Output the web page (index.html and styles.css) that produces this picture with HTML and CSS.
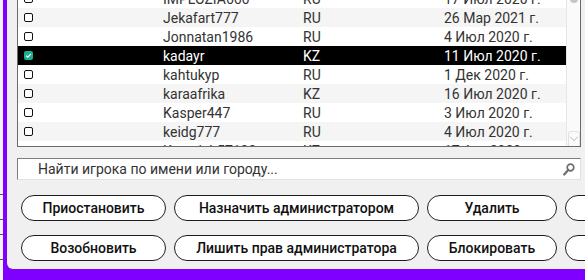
FILE: index.html
```html
<!doctype html>
<html>
	<head>
		<meta charset="utf-8" />
		<title>Игроки</title>
		<link rel="stylesheet" href="styles.css">
	</head>
	<body>
		<div class="screen">
			<div class="edge"></div>
			<div class="window">
				<div class="panel">
					<div class="list">
						<div class="rows">
							<div class="rows-inner">
								<div class="row"><span class="check"></span><span>IMPLOZIA666</span><span>RU</span><span>17 Июл 2020 г.</span></div>
								<div class="row"><span class="check"></span><span>Jekafart777</span><span>RU</span><span>26 Мар 2021 г.</span></div>
								<div class="row"><span class="check"></span><span>Jonnatan1986</span><span>RU</span><span>4 Июл 2020 г.</span></div>
								<div class="row selected"><span class="check checked"><svg viewBox="0 0 9 9" width="9" height="9"><path d="M2.2 4.8 L3.8 6.2 L6.9 2.9" fill="none" stroke="#fff" stroke-width="1.3"/></svg></span><span>kadayr</span><span>KZ</span><span>11 Июл 2020 г.</span></div>
								<div class="row"><span class="check"></span><span>kahtukyp</span><span>RU</span><span>1 Дек 2020 г.</span></div>
								<div class="row"><span class="check"></span><span>karaafrika</span><span>KZ</span><span>16 Июл 2020 г.</span></div>
								<div class="row"><span class="check"></span><span>Kasper447</span><span>RU</span><span>3 Июл 2020 г.</span></div>
								<div class="row"><span class="check"></span><span>keidg777</span><span>RU</span><span>4 Июл 2020 г.</span></div>
								<div class="row"><span class="check"></span><span>Kuzmich57100</span><span>KZ</span><span>17 Авг 2020 г.</span></div>
							</div>
						</div>
						<div class="scrollbar">
							<div class="thumb"></div>
							<div class="arrow">
								<svg viewBox="0 0 11 8" width="11" height="8"><path d="M1.5 1.5 L5.5 6 L9.5 1.5" fill="none" stroke="#b4b4b4" stroke-width="1"/></svg>
							</div>
						</div>
					</div>

					<label class="search">
						<input type="text" placeholder="Найти игрока по имени или городу..." />
						<svg class="search-icon" viewBox="0 0 12 13" width="12" height="13"><circle cx="7.5" cy="4.5" r="3.3" fill="none" stroke="#6e6e6e" stroke-width="1.7"/><path d="M5.2 7 L1.2 11.5" stroke="#6e6e6e" stroke-width="2.2" stroke-linecap="round"/></svg>
					</label>

					<div class="actions">
						<button type="button">Приостановить</button>
						<button type="button">Назначить администратором</button>
						<button type="button">Удалить</button>
						<button type="button">Сбросить</button>
						<button type="button">Возобновить</button>
						<button type="button">Лишить прав администратора</button>
						<button type="button">Блокировать</button>
						<button type="button">Обновить</button>
					</div>
				</div>
			</div>
		</div>
	</body>
</html>
```

FILE: styles.css
```css
* {
	box-sizing: border-box;
}

html {
	--color-frame: #8000ff;
	--color-panel: #f0f0f0;
	--color-text: #333;
	--color-line: #6b6b6b;
	--color-stripe: #f5f5f5;
	--color-accent: #1aaf8f;
	--font-main: Roboto, "Liberation Sans", sans-serif;
}

body {
	margin: 0;
	width: 585px;
	height: 280px;
	overflow: hidden;
	background: var(--color-panel);
	font-family: var(--font-main);
	color: var(--color-text);
}

.screen {
	display: flex;
	height: 280px;
}

.edge {
	width: 3px;
	flex: none;
	background:
		linear-gradient(
			to bottom,
			transparent 194px, #555 194px, #555 195px,
			transparent 195px, transparent 219px, #555 219px, #555 220px,
			transparent 220px, transparent 234px, #555 234px, #555 235px,
			transparent 235px, transparent 259px, #555 259px, #555 260px,
			transparent 260px
		),
		#f4f4f4;
}

.window {
	flex: 1;
	min-width: 0;
	background: var(--color-frame);
	padding: 0 0 11px 4px;
}

.panel {
	height: 100%;
	background: var(--color-panel);
	border-bottom-left-radius: 6px;
	padding-left: 10px;
	overflow: hidden;
	display: flex;
	flex-direction: column;
}

/* player list */

.list {
	flex: none;
	width: 564px;
	height: 147px;
	border: 1px solid var(--color-line);
	border-top: none;
	background: #fff;
	display: flex;
}

.rows {
	flex: 1;
	overflow: hidden;
}

.rows-inner {
	margin-top: -11px;
}

.row {
	display: grid;
	grid-template-columns: 145px 140px 141px 1fr;
	align-items: center;
	height: 19px;
	font-size: 14px;
	white-space: nowrap;
}

.row:nth-child(even) {
	background: var(--color-stripe);
}

.row.selected {
	background: #000;
	color: #fff;
}

.check {
	display: block;
	width: 9px;
	height: 9px;
	margin-left: 6px;
	border: 1.5px solid #111;
	border-radius: 2px;
	background: #fff;
}

.check.checked {
	border: none;
	background: var(--color-accent);
}

.check svg {
	display: block;
}

.scrollbar {
	width: 14px;
	flex: none;
	background: #fafafa;
	border-left: 1px solid #e6e6e6;
	display: flex;
	flex-direction: column;
	align-items: center;
}

.thumb {
	width: 8px;
	height: 10px;
	margin-top: -7px;
	border-radius: 4px;
	background: #c4c4c4;
}

.arrow {
	margin-top: auto;
	width: 12px;
	height: 15px;
	border: 1px solid #e2e2e2;
	border-bottom: none;
	border-radius: 3px 3px 0 0;
	display: flex;
	align-items: center;
	justify-content: center;
}

.arrow svg {
	display: block;
}

/* search */

.search {
	flex: none;
	width: 564px;
	height: 22px;
	margin-top: 11px;
	display: flex;
	align-items: center;
	background: #fff;
	border: 1px solid;
	border-color: #7d7d7d #e2e2e2 #e2e2e2 #7d7d7d;
}

.search input {
	flex: 1;
	min-width: 0;
	height: 100%;
	border: none;
	outline: none;
	background: transparent;
	padding: 0 0 0 20px;
	font: 14px var(--font-main);
	color: var(--color-text);
}

.search input::placeholder {
	color: var(--color-text);
	opacity: 1;
}

.search-icon {
	flex: none;
	margin: 1px 5px 0 0;
}

/* actions */

.actions {
	flex: none;
	margin: 15px 0 0 4px;
	display: grid;
	grid-template-columns: 145px 245px 130px 130px;
	gap: 14px 8px;
}

button {
	appearance: none;
	height: 26px;
	padding: 0;
	border: 1.5px solid #1e1e1e;
	border-radius: 13px;
	background: #fff;
	font: 500 14px var(--font-main);
	color: #111;
	white-space: nowrap;
}
```
